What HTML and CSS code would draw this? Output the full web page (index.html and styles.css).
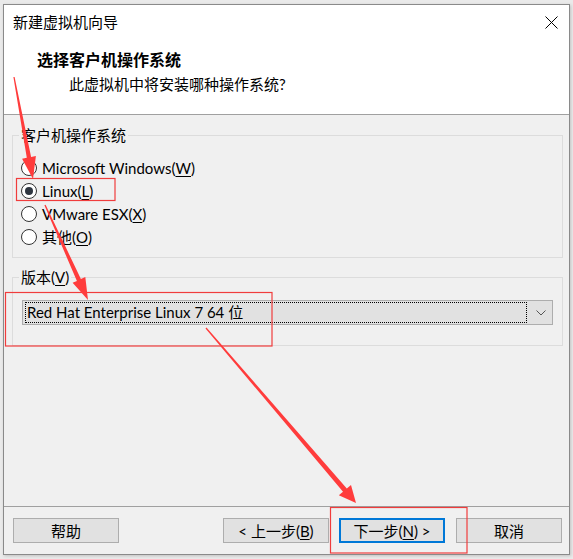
FILE: index.html
```html
<!DOCTYPE html>
<html lang="zh">
<head>
<meta charset="utf-8">
<title>新建虚拟机向导</title>
<link rel="stylesheet" href="styles.css">
</head>
<body>
<div class="window">
  <div class="header">
    <div class="titlebar">
      <span class="title">新建虚拟机向导</span>
      <svg class="close" width="13" height="13" viewBox="0 0 13 13"><path d="M0.5 0.5 L12.5 12.5 M12.5 0.5 L0.5 12.5" stroke="#000" stroke-width="1" fill="none"/></svg>
    </div>
    <div class="heading">选择客户机操作系统</div>
    <div class="subtitle">此虚拟机中将安装哪种操作系统?</div>
  </div>
  <div class="content">
    <fieldset class="group group-os">
      <legend class="legend">客户机操作系统</legend>
      <div class="radio-list">
        <div class="radio-row"><span class="radio"></span><span class="label">Microsoft Windows(<u>W</u>)</span></div>
        <div class="radio-row"><span class="radio checked"></span><span class="label">Linux(<u>L</u>)</span></div>
        <div class="radio-row"><span class="radio"></span><span class="label">VMware ESX(<u>X</u>)</span></div>
        <div class="radio-row"><span class="radio"></span><span class="label">其他(<u>O</u>)</span></div>
      </div>
    </fieldset>
    <fieldset class="group group-ver">
      <legend class="legend">版本(<u>V</u>)</legend>
      <div class="combo">
        <span class="combo-value">Red Hat Enterprise Linux 7 64 位</span>
        <svg class="chevron" width="10" height="6" viewBox="0 0 10 6"><path d="M0.5 0.5 L5 5 L9.5 0.5" stroke="#555" stroke-width="1" fill="none"/></svg>
      </div>
    </fieldset>
  </div>
  <div class="footer">
    <button class="btn">帮助</button>
    <span class="spacer"></span>
    <button class="btn">&lt; 上一步(<u>B</u>)</button>
    <button class="btn btn-next">下一步(<u>N</u>) &gt;</button>
    <button class="btn btn-cancel">取消</button>
  </div>
</div>
<svg class="annot" width="573" height="559" viewBox="0 0 573 559">
  <g fill="none" stroke="#f03c3c" stroke-width="1.2">
    <rect x="16.5" y="178.5" width="98.5" height="22"/>
    <rect x="5.5" y="292.5" width="266.5" height="53.5"/>
    <rect x="330.5" y="507.5" width="136.5" height="45.5"/>
  </g>
  <g fill="#ff3c3c">
    <polygon points="14.6,76.9 31.1,157.0 35.9,156.1 33,179 22.1,158.7 26.8,157.8 13.4,77.1"/>
    <polygon points="45.6,204.8 80.9,279.1 85.3,277.1 88,300 72.6,282.8 76.9,280.9 44.4,205.3"/>
    <polygon points="206.5,327.6 346.8,488.5 351,484.9 356,503 338.8,495.3 343,491.7 205.5,328.4"/>
  </g>
</svg>
</body>
</html>
```
FILE: styles.css
```css
html, body {
  margin: 0;
  padding: 0;
}
body {
  width: 573px;
  height: 559px;
  background: #eaeaea;
  padding: 4px 0 0 3px;
  box-sizing: border-box;
  font-family: "Lato", "Noto Sans CJK SC", sans-serif;
  font-size: 15px;
  color: #000;
  overflow: hidden;
}
.window {
  width: 567px;
  height: 551px;
  box-sizing: border-box;
  border: 1px solid #8a8a8a;
  background: #f0f0f0;
  display: flex;
  flex-direction: column;
  box-shadow: 1px 1px 3px rgba(0, 0, 0, 0.18);
}
.header {
  height: 110px;
  box-sizing: border-box;
  background: #fff;
  border-bottom: 1px solid #a0a0a0;
  padding-top: 7px;
}
.titlebar {
  display: flex;
  justify-content: space-between;
  align-items: center;
  height: 20px;
  padding: 0 11px 0 9px;
}
.title {
  line-height: 20px;
}
.close {
  display: block;
  margin-top: 1px;
}
.heading {
  margin-top: 18px;
  padding-left: 33px;
  line-height: 20px;
  font-size: 16px;
  font-weight: bold;
}
.subtitle {
  margin-top: 4px;
  padding-left: 65px;
  line-height: 20px;
}
.content {
  flex: 1;
  padding-top: 10px;
}
.group {
  margin: 0 6px 0 8px;
  border: 1px solid #dcdcdc;
  padding: 0;
  min-width: 0;
}
.legend {
  margin-left: 6px;
  padding: 0 2px;
  line-height: 20px;
}
.group-os {
  padding: 11px 0 9px 0;
}
.radio-list {
  padding-left: 8px;
}
.group-ver {
  margin-top: 9px;
  padding: 13px 9px 20px 9px;
}
.group-ver .legend {
  margin-left: -3px;
}
.radio-row {
  display: flex;
  align-items: center;
  height: 23px;
}
.radio {
  width: 16px;
  height: 16px;
  box-sizing: border-box;
  border: 1px solid #333;
  border-radius: 50%;
  background: #fff;
  display: flex;
  align-items: center;
  justify-content: center;
  margin-right: 5px;
}
.radio.checked::after {
  content: "";
  width: 8px;
  height: 8px;
  border-radius: 50%;
  background: #2f3640;
}
.label {
  line-height: 20px;
}
u {
  text-underline-offset: 2px;
}
.combo {
  height: 25px;
  box-sizing: border-box;
  border: 1px solid #adadad;
  background: #e1e1e1;
  display: flex;
  align-items: center;
  padding: 1px 0 1px 2px;
}
.combo-value {
  flex: 1;
  height: 21px;
  box-sizing: border-box;
  border: 1px dotted #000;
  line-height: 19px;
  padding-left: 1px;
  white-space: nowrap;
}
.chevron {
  display: block;
  margin: 1px 6px 0 9px;
}
.footer {
  height: 48px;
  box-sizing: border-box;
  border-top: 1px solid #a0a0a0;
  display: flex;
  align-items: flex-start;
  padding: 11px 7px 0 9px;
}
.spacer {
  flex: 1;
}
.btn {
  width: 106px;
  height: 25px;
  box-sizing: border-box;
  border: 1px solid #adadad;
  background: #e1e1e1;
  font: inherit;
  line-height: 20px;
  padding: 0;
  color: #000;
}
.btn-next {
  margin-left: 10px;
  border: 2px solid #0078d7;
}
.btn-cancel {
  margin-left: 11px;
}
.annot {
  position: absolute;
  left: 0;
  top: 0;
  pointer-events: none;
}
```
